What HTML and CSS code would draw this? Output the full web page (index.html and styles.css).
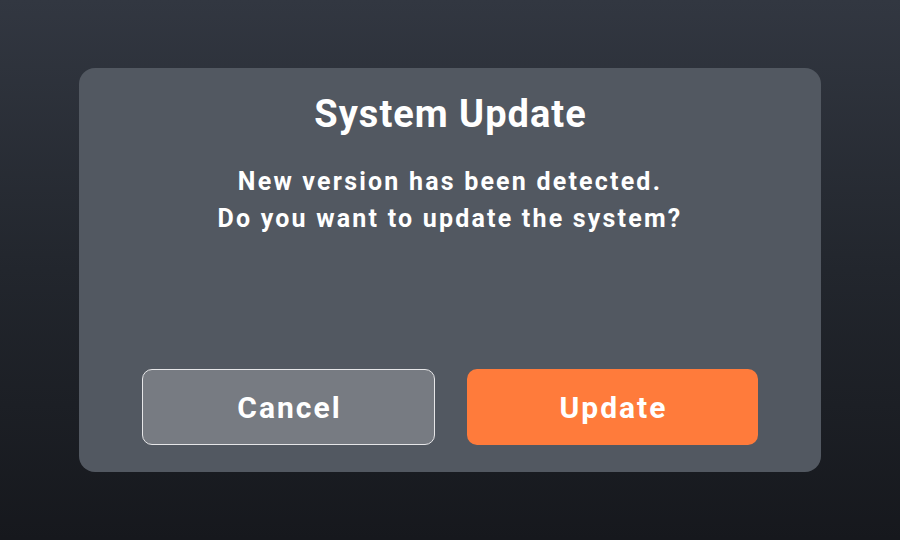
FILE: index.html
```html
<!DOCTYPE html>
<html>
<head>
<meta charset="utf-8">
<link rel="stylesheet" href="styles.css">
</head>
<body>
<div class="screen">
  <div class="dialog">
    <h1 class="title">System Update</h1>
    <p class="message">New version has been detected.<br>Do you want to update the system?</p>
    <div class="actions">
      <button class="btn btn-cancel">Cancel</button>
      <button class="btn btn-update">Update</button>
    </div>
  </div>
</div>
</body>
</html>
```
FILE: styles.css
```css
html, body {
  margin: 0;
  padding: 0;
  width: 900px;
  height: 540px;
  overflow: hidden;
}
body {
  font-family: Roboto, "Liberation Sans", sans-serif;
  background: linear-gradient(180deg, #323741 0%, #22262d 50%, #16181d 100%);
}
.screen {
  width: 900px;
  height: 540px;
  display: flex;
  justify-content: center;
  padding-top: 68px;
  box-sizing: border-box;
}
.dialog {
  width: 742px;
  height: 404px;
  box-sizing: border-box;
  background: #525861;
  border-radius: 16px;
  display: flex;
  flex-direction: column;
  align-items: center;
  padding: 24px 63px 27px;
}
.title {
  margin: 0;
  color: #ffffff;
  font-size: 38px;
  font-weight: 700;
  line-height: 44px;
  letter-spacing: 1px;
  text-indent: 1px;
}
.message {
  margin: 27px 0 0;
  color: #ffffff;
  font-size: 25px;
  font-weight: 700;
  line-height: 37px;
  letter-spacing: 2.2px;
  text-align: center;
}
.actions {
  margin-top: auto;
  width: 100%;
  display: flex;
  gap: 32px;
}
.btn {
  flex: 1;
  height: 76px;
  border-radius: 10px;
  font-family: Roboto, "Liberation Sans", sans-serif;
  font-size: 30px;
  font-weight: 700;
  letter-spacing: 2px;
  text-indent: 2px;
  color: #ffffff;
  cursor: pointer;
  box-sizing: border-box;
  padding: 0;
}
.btn-cancel {
  background: #777b82;
  border: 1px solid #e6e6e8;
}
.btn-update {
  background: #ff7b3b;
  border: none;
}
```
